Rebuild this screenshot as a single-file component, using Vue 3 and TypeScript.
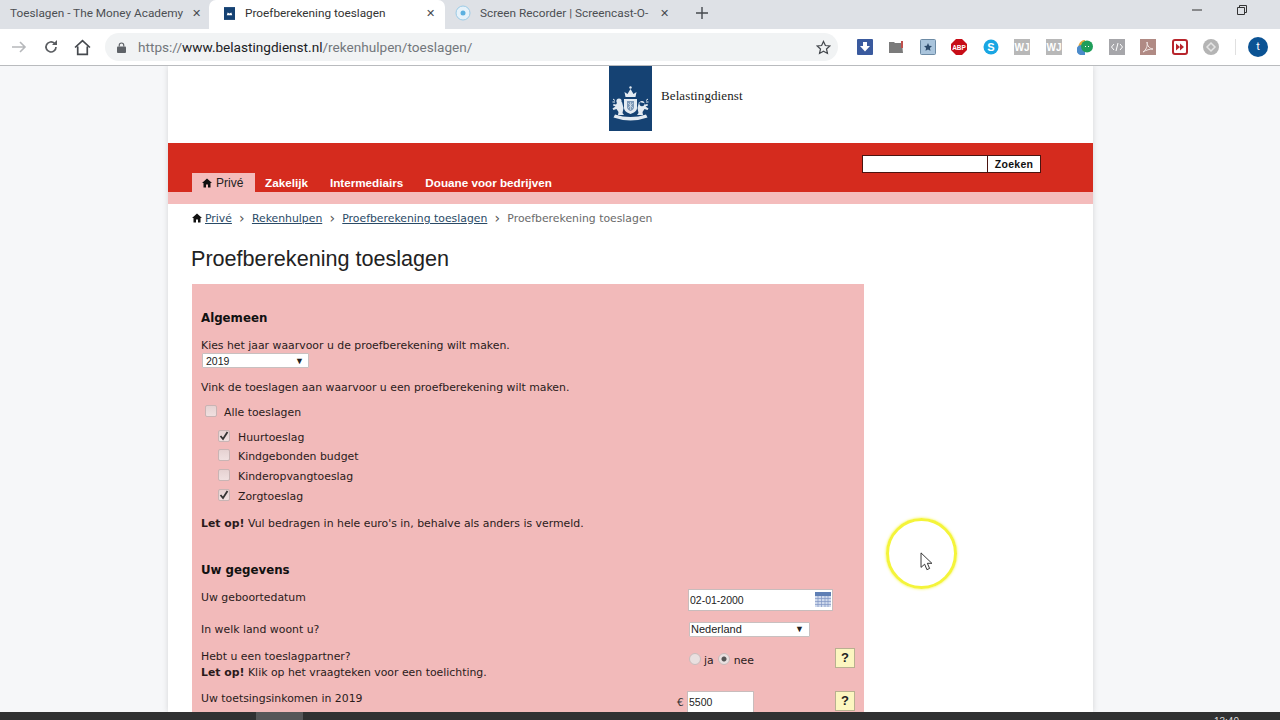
<script setup lang="ts">
interface Toeslag {
  label: string;
  checked: boolean;
}

const tools: string[] = ["down", "folder", "star", "abp", "skype", "wj", "wj", "chat", "code", "pdf", "ff", "disc"];

const toeslagen: Toeslag[] = [
  { label: "Huurtoeslag", checked: true },
  { label: "Kindgebonden budget", checked: false },
  { label: "Kinderopvangtoeslag", checked: false },
  { label: "Zorgtoeslag", checked: true },
];
</script>

<template>
  <div class="screen">
    <div class="tabstrip">
      <div class="tab first">
        <span class="tab-title">Toeslagen - The Money Academy</span>
        <span class="tab-x">✕</span>
      </div>
      <div class="tab active">
        <svg class="favicon" viewBox="0 0 12 14" width="11" height="13">
          <rect width="12" height="14" fill="#154273" />
          <path d="M3 9l1-3 2 1 2-1 1 3z" fill="#fff" />
        </svg>
        <span class="tab-title">Proefberekening toeslagen</span>
        <span class="tab-x">✕</span>
      </div>
      <div class="tab">
        <svg class="favicon" viewBox="0 0 16 16" width="16" height="16">
          <circle cx="8" cy="8" r="7" fill="#e6f2fa" stroke="#9ccbe6" />
          <circle cx="8" cy="8" r="2.500" fill="#5cb0e0" />
        </svg>
        <span class="tab-title">Screen Recorder | Screencast-O-</span>
        <span class="tab-x">✕</span>
      </div>
      <svg class="plus" viewBox="0 0 12 12" width="12" height="12">
        <path d="M6 0v12M0 6h12" stroke="#45494e" stroke-width="1.400" />
      </svg>
      <div class="winctl">
        <svg viewBox="0 0 10 2" width="10" height="2"><path d="M0 1h10" stroke="#333" /></svg>
        <svg viewBox="0 0 10 10" width="10" height="10">
          <path d="M.5 2.500h7v7h-7zM2.500 2.500v-2h7v7h-2" fill="none" stroke="#333" />
        </svg>
      </div>
    </div>

    <div class="toolbar">
      <svg class="nav-icon forward" viewBox="0 0 16 16" width="16" height="16">
        <path d="M1 8h13M9 3l5 5-5 5" fill="none" stroke="#b6b8bb" stroke-width="1.600" />
      </svg>
      <svg class="nav-icon reload" viewBox="0 0 16 16" width="16" height="16">
        <path d="M13 8a5 5 0 1 1-1.500-3.600" fill="none" stroke="#5a5d61" stroke-width="1.700" />
        <path d="M14 1v5H9z" fill="#5a5d61" />
      </svg>
      <svg class="nav-icon home" viewBox="0 0 16 16" width="17" height="17">
        <path d="M1 8l7-6.500L15 8M3.500 7v7.500h9V7" fill="none" stroke="#45494e" stroke-width="1.600" />
      </svg>
      <div class="omnibox">
        <svg viewBox="0 0 10 12" width="9" height="11">
          <rect y="5" width="10" height="7" rx="1" fill="#5f6368" />
          <path d="M2.500 5V3.500a2.500 2.500 0 0 1 5 0V5" fill="none" stroke="#5f6368" stroke-width="1.300" />
        </svg>
        <span class="url"><span class="dim">https://</span>www.belastingdienst.nl<span class="dim">/rekenhulpen/toeslagen/</span></span>
        <svg class="bookmark" viewBox="0 0 16 16" width="15" height="15">
          <path d="M8 1.500l2 4.400 4.700.5-3.500 3.200 1 4.700L8 11.900l-4.200 2.400 1-4.700L1.300 6.400 6 5.900z" fill="none" stroke="#45494e" stroke-width="1.300" />
        </svg>
      </div>
      <div class="tools">
        <div v-for="(t, i) in tools" :key="i" class="tool">
          <svg viewBox="0 0 16 16" width="16" height="16">
            <template v-if="t === 'down'">
              <rect width="16" height="16" rx="1" fill="#3a5a9e" />
              <path d="M6 3h4v4h3l-5 5.500L3 7h3z" fill="#fff" />
            </template>
            <template v-else-if="t === 'folder'">
              <path d="M1 3h5l1 1h7l1 10H1z" fill="#7b7b7b" />
              <rect x="13" y="2" width="2" height="7" fill="#c0504d" />
            </template>
            <template v-else-if="t === 'star'">
              <rect x=".5" y=".5" width="15" height="15" rx="1" fill="#a9c4dc" stroke="#6d8ba5" />
              <path d="M8 4l1.200 2.700 2.800.3-2.100 1.900.6 2.900L8 10.400l-2.500 1.400.6-2.900L4 7l2.800-.3z" fill="#2b4a6b" />
            </template>
            <template v-else-if="t === 'abp'">
              <path d="M5 0h6l5 5v6l-5 5H5l-5-5V5z" fill="#c70d17" />
              <text x="8" y="10.500" class="tool-text abp">ABP</text>
            </template>
            <template v-else-if="t === 'skype'">
              <circle cx="8" cy="8" r="7.500" fill="#19a6e3" />
              <text x="8" y="12" class="tool-text skype">S</text>
            </template>
            <template v-else-if="t === 'wj'">
              <rect width="16" height="16" fill="#b8b8b8" />
              <text x="8" y="12" class="tool-text wj">WJ</text>
            </template>
            <template v-else-if="t === 'chat'">
              <path d="M8 1a7 7 0 0 0-5 11.500V16h4z" fill="#e8a93a" />
              <path d="M4 6a5 5 0 0 0 1 10h3V8z" fill="#4c8bcb" />
              <circle cx="10" cy="7.500" r="6" fill="#1f9e5a" />
              <path d="M8 7.500h1M11 7.500h1" stroke="#fff" />
            </template>
            <template v-else-if="t === 'code'">
              <rect width="16" height="16" fill="#a6a6aa" />
              <path d="M5 5L2.500 8 5 11M11 5l2.500 3-2.500 3M9 4L7 12" fill="none" stroke="#fff" />
            </template>
            <template v-else-if="t === 'pdf'">
              <rect width="16" height="16" fill="#b08a84" />
              <path d="M3 13c3-2 5-6 4-10 0 4 3 7 6 7-3 0-7 1-10 3z" fill="none" stroke="#f1e6e4" />
            </template>
            <template v-else-if="t === 'ff'">
              <rect x="1" y="1" width="14" height="14" rx="2" fill="#fff" stroke="#b8252c" stroke-width="2" />
              <path d="M4 4.500L8 8l-4 3.500zM8 4.500L12 8l-4 3.500z" fill="#b8252c" />
            </template>
            <template v-else>
              <circle cx="8" cy="8" r="8" fill="#b4b4b4" />
              <path d="M8 4l4 4-4 4-4-4z" fill="none" stroke="#e4e4e4" stroke-width="1.500" />
            </template>
          </svg>
        </div>
      </div>
      <span class="sep"></span>
      <span class="avatar">t</span>
    </div>

    <div class="viewport">
      <div class="page">
        <header class="masthead">
          <svg class="crest" viewBox="0 0 43 65" width="43" height="65">
            <rect width="43" height="65" fill="#154273" />
            <g fill="#e4ebf2">
              <path d="M16.500 31l-1-5 3 2 3-5 3 5 3-2-1 5z" />
              <circle cx="21.500" cy="21.500" r="1.200" />
              <path d="M15 33h13v9c0 3-3.500 5-6.500 6-3-1-6.500-3-6.500-6z" />
              <circle cx="10" cy="35" r="2.600" />
              <path d="M8 37l5-1 1.500 6-1 5 1.500 2H9l.5-3-2-3-3 1-1-1.500 3-2-2.500-1 .5-1.500 2.500.5z" />
              <path d="M4 33l2 1.500M3.500 36l2.500 0" stroke="#e4ebf2" fill="none" />
              <path d="M33 35a2.600 2.600 0 1 1-.1 0zM35 37l-5-1-1.500 6 1 5-1.500 2h6l-.5-3 2-3 3 1 1-1.500-3-2 2.500-1-.5-1.500-2.500.5z" />
              <path d="M39 33l-2 1.500M39.500 36L37 36" stroke="#e4ebf2" fill="none" />
              <path d="M6 48.500q15.500 5 31 0l1.500 3q-17 6-34 0z" />
            </g>
            <path d="M18 35h7v6.500c0 1.500-2 3-3.500 3.500-1.500-.5-3.500-2-3.500-3.500z" fill="#7f9ab8" />
            <path d="M19 37l5 5M24 37l-5 5M21.500 36v8" stroke="#e4ebf2" stroke-width=".6" />
          </svg>
          <span class="wordmark">Belastingdienst</span>
        </header>

        <div class="redbar">
          <div class="search">
            <span class="search-input"></span>
            <span class="search-btn">Zoeken</span>
          </div>
          <nav class="mainnav">
            <a class="nav-item current">
              <svg viewBox="0 0 10 10" width="10" height="10">
                <path d="M5 .5L10 5H8.500v4.500H6V6.500H4v3H1.500V5H0z" fill="#111" />
              </svg>
              Privé
            </a>
            <a class="nav-item">Zakelijk</a>
            <a class="nav-item">Intermediairs</a>
            <a class="nav-item">Douane voor bedrijven</a>
          </nav>
        </div>
        <div class="strip"></div>

        <div class="crumbs">
          <svg viewBox="0 0 10 10" width="10" height="10">
            <path d="M5 .5L10 5H8.500v4.500H6V6.500H4v3H1.500V5H0z" fill="#111" />
          </svg>
          <a>Privé</a><i>›</i>
          <a>Rekenhulpen</a><i>›</i>
          <a>Proefberekening toeslagen</a><i>›</i>
          <span>Proefberekening toeslagen</span>
        </div>

        <h1>Proefberekening toeslagen</h1>

        <section class="form">
          <h2>Algemeen</h2>
          <p class="year-label">Kies het jaar waarvoor u de proefberekening wilt maken.</p>
          <div class="select year">2019<b>▼</b></div>
          <p class="tick-label">Vink de toeslagen aan waarvoor u een proefberekening wilt maken.</p>

          <div class="check all"><span class="box"></span>Alle toeslagen</div>
          <div v-for="t in toeslagen" :key="t.label" class="check sub">
            <span class="box">
              <svg v-if="t.checked" viewBox="0 0 10 10" width="10" height="10">
                <path d="M1.500 5l2.500 3 4.500-7" fill="none" stroke="#333" stroke-width="1.800" />
              </svg>
            </span>
            {{ t.label }}
          </div>

          <p class="letop"><b>Let op!</b> Vul bedragen in hele euro's in, behalve als anders is vermeld.</p>

          <h2 class="gegevens">Uw gegevens</h2>

          <div class="row birth">
            <span class="label">Uw geboortedatum</span>
            <div class="control">
              <div class="input date">
                02-01-2000
                <svg viewBox="0 0 16 15" width="16" height="15">
                  <rect width="16" height="15" fill="#cfd9ec" />
                  <rect width="16" height="4" fill="#5f7fb5" />
                  <path d="M0 6.500h16M0 9.500h16M0 12.500h16M3 4v11M6.500 4v11M10 4v11M13 4v11" stroke="#7f95c4" stroke-width=".7" />
                </svg>
              </div>
            </div>
          </div>

          <div class="row country">
            <span class="label">In welk land woont u?</span>
            <div class="control">
              <div class="select land">Nederland<b>▼</b></div>
            </div>
          </div>

          <div class="row partner">
            <span class="label">Hebt u een toeslagpartner?<br /><b>Let op!</b> Klik op het vraagteken voor een toelichting.</span>
            <div class="control radios">
              <span class="radio"></span>ja
              <span class="radio on"></span>nee
            </div>
            <span class="help">?</span>
          </div>

          <div class="row income">
            <span class="label">Uw toetsingsinkomen in 2019</span>
            <div class="control money">
              <span class="euro">€</span>
              <div class="input amount">5500</div>
            </div>
            <span class="help">?</span>
          </div>
        </section>
      </div>

      <div class="pointer">
        <svg viewBox="0 0 13 21" width="12" height="19">
          <path d="M1 1v16l4-3.500 2.500 6 3-1.300-2.500-5.700h5z" fill="#fff" stroke="#222" />
        </svg>
      </div>
    </div>

    <div class="taskbar">
      <span class="task"></span>
      <span class="clock">13:40</span>
    </div>
  </div>
</template>

<style>
html,
body {
  margin: 0;
  overflow: hidden;
}
</style>

<style scoped>
.screen {
  width: 1280px;
  height: 720px;
  display: flex;
  flex-direction: column;
  overflow: hidden;
  font-family: "DejaVu Sans", Verdana, sans-serif;
  color: #222;
}

/* browser chrome */
.tabstrip {
  height: 29px;
  flex: none;
  display: flex;
  align-items: stretch;
  background: #dee1e6;
  font-family: Roboto, "Liberation Sans", sans-serif;
  font-size: 11.800px;
  color: #4c4f53;
}

.tab {
  width: 235px;
  padding: 0 11px 3px 10px;
  box-sizing: border-box;
  display: flex;
  align-items: center;
  gap: 9px;
}

.tab.first {
  width: 209px;
}

.tab.active {
  width: 236px;
  padding: 0 10px 3px 15px;
  background: #fff;
  border-radius: 7px 7px 0 0;
  color: #333;
}

.tab.active .favicon {
  margin-right: 1px;
}

.tab-title {
  flex: 1;
  white-space: nowrap;
}

.tab-x {
  font-size: 11px;
  color: #45494e;
}

.plus {
  align-self: center;
  margin: -3px 0 0 16px;
}

.winctl {
  margin-left: auto;
  width: 88px;
  padding: 0 33px 9px 0;
  box-sizing: border-box;
  display: flex;
  align-items: center;
  justify-content: space-between;
}

.toolbar {
  height: 36px;
  flex: none;
  display: flex;
  align-items: center;
  background: #fff;
  border-bottom: 1px solid #b9bbbe;
}

.nav-icon {
  flex: none;
}

.forward {
  margin-left: 11px;
}

.reload {
  margin-left: 16px;
}

.home {
  margin-left: 15px;
}

.omnibox {
  flex: none;
  width: 733px;
  height: 28px;
  margin-left: 14px;
  padding: 0 7px 0 12px;
  box-sizing: border-box;
  display: flex;
  align-items: center;
  background: #f1f3f4;
  border-radius: 14px;
}

.url {
  margin-left: 12px;
  font-family: Roboto, "Liberation Sans", sans-serif;
  font-size: 13.600px;
  color: #202124;
  white-space: nowrap;
}

.url .dim {
  color: #73777c;
}

.bookmark {
  margin-left: auto;
}

.tools {
  display: flex;
  margin-left: 11px;
}

.tool {
  width: 31.500px;
  display: flex;
  justify-content: center;
}

.tool-text {
  font-family: "Liberation Sans", sans-serif;
  font-weight: 700;
  fill: #fff;
  text-anchor: middle;
}

.abp {
  font-size: 6.500px;
}

.skype {
  font-size: 11px;
}

.wj {
  font-size: 10px;
}

.sep {
  width: 1px;
  height: 16px;
  margin-left: 8px;
  background: #e0e0e0;
}

.avatar {
  width: 20px;
  height: 20px;
  margin-left: 12px;
  border-radius: 50%;
  background: #0b5394;
  color: #fff;
  font-family: Roboto, sans-serif;
  font-size: 11px;
  text-align: center;
  line-height: 20px;
}

/* website */
.viewport {
  position: relative;
  flex: 1;
  min-height: 0;
  overflow: hidden;
  background: #f6f7f9;
}

.page {
  width: 925px;
  height: 100%;
  margin-left: 168px;
  background: #fff;
  overflow: hidden;
  box-shadow: 0 0 6px rgba(0, 0, 0, 0.14);
}

.masthead {
  height: 76px;
  padding-left: 441px;
  display: flex;
  align-items: flex-start;
  gap: 9px;
}

.wordmark {
  margin-top: 22px;
  font-family: "Liberation Serif", serif;
  font-size: 13px;
  line-height: 16px;
  letter-spacing: 0.1px;
  color: #222;
}

.redbar {
  height: 49px;
  margin-top: 1px;
  padding: 0 52px 0 24px;
  display: flex;
  flex-direction: column;
  justify-content: flex-end;
  background: #d52b1e;
}

.search {
  align-self: flex-end;
  display: flex;
}

.search-input {
  width: 124px;
  height: 16px;
  background: #fff;
  border: 1px solid #4a1410;
}

.search-btn {
  width: 52px;
  height: 16px;
  background: #fff;
  border: 1px solid #4a1410;
  border-left: 0;
  text-align: center;
  font-size: 10.500px;
  font-family: "Liberation Sans", sans-serif;
  font-weight: 700;
  line-height: 16px;
  color: #111;
  letter-spacing: 0.3px;
}

.mainnav {
  display: flex;
  font-family: "Liberation Sans", sans-serif;
  font-size: 11.700px;
  font-weight: 700;
  color: #fff;
}

.nav-item {
  height: 19px;
  padding: 0 11px;
  display: flex;
  align-items: center;
  gap: 4px;
  white-space: nowrap;
}

.nav-item.current {
  width: 63px;
  box-sizing: border-box;
  margin-right: -1px;
  padding: 0 10px;
  background: #f4bcbc;
  color: #222;
  font-size: 12px;
  font-weight: 400;
}

.strip {
  height: 12px;
  background: #f4bcbc;
}

.crumbs {
  height: 14px;
  margin: 7px 0 0 24px;
  display: flex;
  align-items: center;
  gap: 3px;
  font-size: 10.850px;
  white-space: nowrap;
  color: #6a6a6a;
}

.crumbs a {
  color: #2a4a66;
  text-decoration: underline;
}

.crumbs i {
  width: 14px;
  text-align: center;
  font-style: normal;
  font-size: 14px;
  color: #555;
}

h1 {
  margin: 20px 0 0 23px;
  font-family: "Liberation Sans", sans-serif;
  font-size: 21.600px;
  font-weight: 400;
  line-height: 28px;
  color: #222;
}

.form {
  width: 672px;
  margin: 11px 0 0 24px;
  padding: 25px 11px 0 9px;
  box-sizing: border-box;
  height: 500px;
  background: #f2baba;
  font-size: 10.880px;
  line-height: 14px;
  color: #2a1a1a;
}

h2 {
  margin: 0;
  font-size: 11.800px;
  font-weight: 700;
  line-height: 18px;
  color: #111;
}

p {
  margin: 0;
}

.year-label {
  margin-top: 12px;
}

.select {
  box-sizing: border-box;
  display: flex;
  justify-content: space-between;
  align-items: center;
  background: #fff;
  border: 1px solid #c8c0c0;
  border-radius: 1px;
  font-family: "Liberation Sans", sans-serif;
  font-size: 10.500px;
  color: #222;
}

.select b {
  font-size: 9px;
  font-weight: 400;
}

.year {
  width: 107px;
  height: 15px;
  margin-left: 1px;
  padding: 0 4px 0 3px;
}

.tick-label {
  margin-top: 13px;
}

.check {
  height: 19.800px;
  display: flex;
  align-items: center;
}

.check.all {
  margin-top: 8px;
  padding-left: 4px;
  gap: 7px;
}

.check.sub {
  padding-left: 17px;
  gap: 0;
}

.check.all + .check.sub {
  margin-top: 5px;
}

.box {
  width: 12px;
  height: 12px;
  flex: none;
  margin-top: -4px;
  display: flex;
  align-items: center;
  justify-content: center;
  box-sizing: border-box;
  background: linear-gradient(#e6d2d2, #f0e0e0);
  border: 1px solid #c9b4b4;
  border-radius: 2px;
}

.check.sub .box {
  margin-right: 8px;
}

.letop {
  margin-top: 10px;
}

.gegevens {
  margin-top: 30px;
}

.row {
  display: grid;
  grid-template-columns: 476px 158px 20px;
  align-items: start;
}

.label {
  display: block;
  padding-top: 1px;
}

.control {
  padding-left: 11px;
  display: flex;
  align-items: center;
}

.birth {
  margin-top: 11px;
  height: 28px;
}

.input {
  box-sizing: border-box;
  background: #fff;
  border: 1px solid #c8bcbc;
  font-family: "Liberation Sans", sans-serif;
  font-size: 10.500px;
  color: #222;
  display: flex;
  align-items: center;
}

.date {
  width: 145px;
  height: 22px;
  padding: 0 1px;
  justify-content: space-between;
  margin-top: -1px;
}

.country {
  margin-top: 4px;
  height: 18px;
}

.land {
  width: 121px;
  height: 15px;
  margin-left: 1px;
  padding: 0 5px 0 1px;
  font-size: 11px;
}

.partner {
  margin-top: 8px;
  height: 33px;
  line-height: 16px;
}

.radios {
  padding: 6px 0 0 12px;
  line-height: 14px;
}

.radio {
  width: 12px;
  height: 12px;
  box-sizing: border-box;
  margin: -4px 3px 0 0;
  border: 1px solid #c9bcbc;
  border-radius: 50%;
  background: #e9e0e0;
}

.radio.on {
  margin-left: 4px;
  margin-right: 4px;
  background: radial-gradient(circle, #555 0 2px, #e9e0e0 3px);
}

.help {
  width: 20px;
  height: 20px;
  box-sizing: border-box;
  background: #fcf6c0;
  border: 1px solid #b9b090;
  font-family: "Liberation Sans", sans-serif;
  font-weight: 700;
  font-size: 13px;
  line-height: 18px;
  text-align: center;
  color: #222;
}

.income {
  margin-top: 10px;
}

.money {
  padding-left: 0;
  gap: 3px;
}

.euro {
  width: 7px;
  font-size: 10.500px;
  color: #333;
}

.amount {
  width: 67px;
  height: 22px;
  padding-left: 1px;
}

/* recorder highlight, lies over the page */
.pointer {
  position: absolute;
  left: 886px;
  top: 452px;
  width: 71px;
  height: 71px;
  box-sizing: border-box;
  border: 3px solid #f4f43a;
  border-radius: 50%;
  box-shadow: 0 0 3px #f4f43a;
}

.pointer svg {
  position: absolute;
  left: 31px;
  top: 31px;
}

.taskbar {
  height: 8px;
  flex: none;
  display: flex;
  background: #303132;
  overflow: hidden;
}

.task {
  width: 47px;
  margin-left: 256px;
  background: #555658;
}

.clock {
  margin-left: auto;
  margin-right: 41px;
  padding-top: 4px;
  font-family: "Liberation Sans", sans-serif;
  font-size: 10px;
  line-height: 12px;
  color: #ddd;
}
</style>
